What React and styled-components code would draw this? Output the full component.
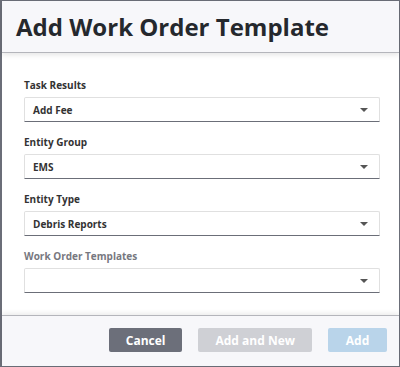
import React from "react";
import styled, { createGlobalStyle } from "styled-components";

const GlobalStyle = createGlobalStyle`
  * { box-sizing: border-box; }
  body {
    margin: 0;
    font-family: "Open Sans", "Liberation Sans", sans-serif;
    background: #ffffff;
  }
`;

const fields = [
  { label: "Task Results", value: "Add Fee" },
  { label: "Entity Group", value: "EMS" },
  { label: "Entity Type", value: "Debris Reports" },
  { label: "Work Order Templates", value: "", disabled: true },
];

const App = () => {
  return (
    <>
      <GlobalStyle />
      <Modal>
        <Header>
          <Title>Add Work Order Template</Title>
        </Header>
        <Body>
          {fields.map((f) => (
            <Field key={f.label}>
              <Label $disabled={f.disabled}>{f.label}</Label>
              <Select>
                <span>{f.value}</span>
                <Caret />
              </Select>
            </Field>
          ))}
        </Body>
        <Footer>
          <Button $variant="cancel">Cancel</Button>
          <Button $variant="muted">Add and New</Button>
          <Button $variant="primary">Add</Button>
        </Footer>
      </Modal>
    </>
  );
};

const Modal = styled.div`
  width: 400px;
  height: 367px;
  border: 1px solid #6b6e78;
  border-left-width: 2px;
  display: flex;
  flex-direction: column;
  background: #fff;
`;

const Header = styled.div`
  height: 52px;
  flex-shrink: 0;
  background: #f7f7fa;
  border-bottom: 1px solid #b4b5bb;
  box-shadow: 0 2px 5px rgba(0, 0, 0, 0.1);
  display: flex;
  align-items: center;
  padding: 0 14px;
  position: relative;
  z-index: 1;
`;

const Title = styled.h1`
  margin: 0;
  font-size: 24px;
  font-weight: 700;
  color: #25282d;
`;

const Body = styled.div`
  flex: 1;
  padding: 25px 19px 0 22px;
  display: flex;
  flex-direction: column;
  gap: 13px;
`;

const Field = styled.div`
  display: flex;
  flex-direction: column;
  gap: 5px;
`;

const Label = styled.div`
  font-size: 10px;
  line-height: 14px;
  font-weight: 700;
  color: ${(p) => (p.$disabled ? "#777880" : "#333")};
`;

const Select = styled.div`
  height: 25px;
  border: 1px solid #e0e0e0;
  border-bottom: 1px solid #6b6e78;
  border-radius: 2px 2px 0 0;
  display: flex;
  align-items: center;
  justify-content: space-between;
  padding: 0 11px 0 8px;
  font-size: 10px;
  font-weight: 700;
  color: #333;
`;

const Caret = styled.span`
  width: 0;
  height: 0;
  border-left: 4px solid transparent;
  border-right: 4px solid transparent;
  border-top: 4px solid #555;
`;

const Footer = styled.div`
  height: 51px;
  flex-shrink: 0;
  background: #f7f7fa;
  border-top: 1px solid #b4b5bb;
  box-shadow: 0 -2px 5px rgba(0, 0, 0, 0.08);
  display: flex;
  align-items: center;
  justify-content: flex-end;
  gap: 16px;
  padding: 0 12px 2px;
`;

const buttonColors = {
  cancel: "#6c6f7a",
  muted: "#cfd0d5",
  primary: "#b9d4ea",
};

const Button = styled.button`
  height: 24px;
  border: none;
  border-radius: 2px;
  padding: 0 17px;
  font-family: "Open Sans", "Liberation Sans", sans-serif;
  font-size: 12px;
  font-weight: 700;
  color: #fff;
  background: ${(p) => buttonColors[p.$variant]};
  min-width: ${(p) => (p.$variant === "primary" ? "59px" : "0")};
`;

export default App;
